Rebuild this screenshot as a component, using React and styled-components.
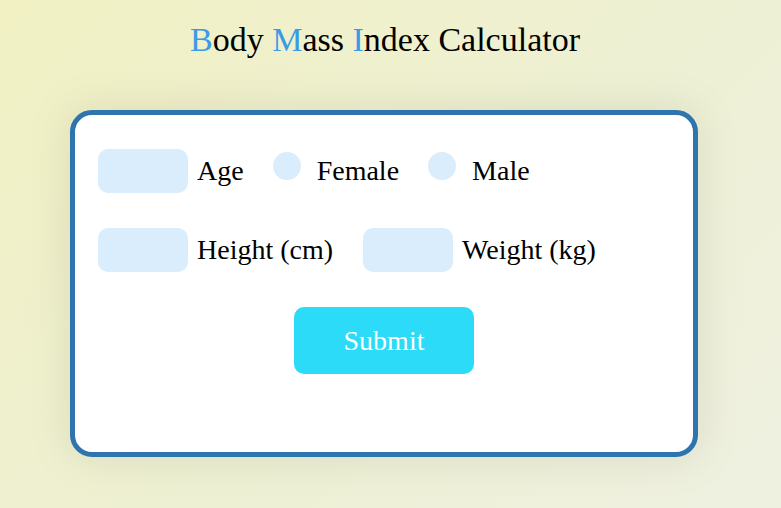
import React from 'react';
import styled, { createGlobalStyle } from 'styled-components';

const GlobalStyle = createGlobalStyle`
  html, body {
    margin: 0;
    min-height: 100%;
  }
  body {
    min-height: 100vh;
    background: linear-gradient(135deg, #f1f1c3 0%, #eef0d4 55%, #eef1e1 100%);
    font-family: "Liberation Serif", "Times New Roman", serif;
    color: #000;
  }
  * {
    box-sizing: border-box;
  }
`;

const Page = styled.div`
  width: 768px;
  padding-top: 20px;
  display: flex;
  flex-direction: column;
  align-items: center;
`;

const Title = styled.h1`
  margin: 0 0 0 2px;
  font-size: 34px;
  font-weight: normal;
  line-height: 39px;
`;

const Initial = styled.span`
  color: #3b9be6;
`;

const Card = styled.form`
  margin-top: 51px;
  width: 628px;
  padding: 34px 23px 78px;
  background: #fff;
  border: 5px solid #2e74ae;
  border-radius: 22px;
  box-shadow: 0 0 40px rgba(120, 120, 100, 0.18);
  display: flex;
  flex-direction: column;
  gap: 35px;
`;

const Row = styled.div`
  display: flex;
  align-items: center;
  gap: ${(p) => p.$gap || '30px'};
`;

const Field = styled.label`
  display: flex;
  align-items: center;
  gap: ${(p) => (p.$radio ? '16px' : '9px')};
  font-size: 28px;
`;

const TextInput = styled.input`
  width: 90px;
  height: 44px;
  border: none;
  border-radius: 10px;
  background: #daedfc;
  outline: none;
`;

const Radio = styled.input`
  appearance: none;
  margin: 0;
  width: 28px;
  height: 28px;
  border-radius: 50%;
  background: #daedfc;
  align-self: flex-start;
  margin-top: -3px;
`;

const SubmitButton = styled.button`
  align-self: center;
  width: 180px;
  height: 67px;
  border: none;
  border-radius: 10px;
  background: #2bdbf7;
  color: #fff;
  font-family: "Liberation Serif", "Times New Roman", serif;
  font-size: 28px;
  cursor: pointer;
`;

export default function App() {
  return (
    <>
      <GlobalStyle />
      <Page>
        <Title>
          <Initial>B</Initial>ody <Initial>M</Initial>ass <Initial>I</Initial>ndex Calculator
        </Title>
        <Card onSubmit={(e) => e.preventDefault()}>
          <Row $gap="29px">
            <Field>
              <TextInput type="text" />
              Age
            </Field>
            <Field $radio>
              <Radio type="radio" name="gender" />
              Female
            </Field>
            <Field $radio>
              <Radio type="radio" name="gender" />
              Male
            </Field>
          </Row>
          <Row>
            <Field>
              <TextInput type="text" />
              Height (cm)
            </Field>
            <Field>
              <TextInput type="text" />
              Weight (kg)
            </Field>
          </Row>
          <SubmitButton type="submit">Submit</SubmitButton>
        </Card>
      </Page>
    </>
  );
}
